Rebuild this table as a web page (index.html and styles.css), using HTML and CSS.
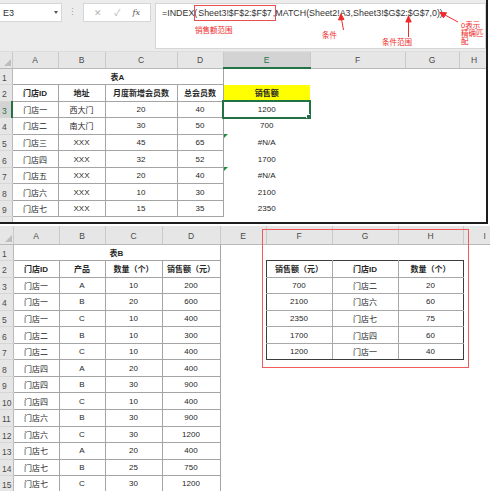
FILE: index.html
```html
<!DOCTYPE html>
<html lang="zh">
<head>
<meta charset="utf-8">
<title>INDEX MATCH</title>
<link rel="stylesheet" href="styles.css">
</head>
<body>
<div class="top">
  <div class="fbar">
    <div class="namebox"><span>E3</span><span class="dd"></span></div>
    <div class="dots">⋮</div>
    <div class="fbtns"><span class="x">✕</span><span class="ok">✓</span><span class="fx">fx</span></div>
    <div class="formula">=INDEX(<span class="hl">Sheet3!$F$2:$F$7</span>,MATCH(Sheet2!A3,Sheet3!$G$2:$G$7,0))</div>
    <span class="note n1">销售额范围</span>
    <span class="note n2">条件</span>
    <span class="note n3">条件范围</span>
    <span class="note n4">0表示<br>精确匹<br>配</span>
    <svg class="arrows" width="490" height="52" viewBox="0 0 490 52">
      <g stroke="#f02a2a" stroke-width="1" fill="#f02a2a">
        <line x1="343.5" y1="30" x2="341.5" y2="19"/>
        <polygon points="341,14 338.5,20 344,19.5"/>
        <line x1="408.5" y1="37" x2="408.5" y2="21"/>
        <polygon points="408.5,16 405.8,22 411.2,22"/>
        <line x1="458" y1="22" x2="445" y2="15"/>
        <polygon points="440,12.5 446.5,12.8 443.5,17.8"/>
      </g>
    </svg>
  </div>
  <table class="sheet sheet-a">
    <colgroup>
      <col class="w-rh"><col class="w-a"><col class="w-b"><col class="w-c"><col class="w-d"><col class="w-e"><col class="w-f"><col class="w-g"><col class="w-h">
    </colgroup>
    <tr class="hdr"><th class="corner"><span class="tri"></span></th><th>A</th><th>B</th><th>C</th><th>D</th><th class="selc">E</th><th>F</th><th>G</th><th>H</th></tr>
    <tr><td class="rh">1</td><td class="t b" colspan="4">表A</td><td></td><td></td><td></td><td></td></tr>
    <tr><td class="rh">2</td><td class="t b">门店ID</td><td class="t b">地址</td><td class="t b">月度新增会员数</td><td class="t b">总会员数</td><td class="yel b">销售额</td><td></td><td></td><td></td></tr>
    <tr><td class="rh selr">3</td><td class="t">门店一</td><td class="t">西大门</td><td class="t">20</td><td class="t">40</td><td class="v sel">1200</td><td></td><td></td><td></td></tr>
    <tr><td class="rh">4</td><td class="t">门店二</td><td class="t">南大门</td><td class="t">30</td><td class="t">50</td><td class="v">700</td><td></td><td></td><td></td></tr>
    <tr><td class="rh">5</td><td class="t">门店三</td><td class="t">XXX</td><td class="t">45</td><td class="t">65</td><td class="v err">#N/A</td><td></td><td></td><td></td></tr>
    <tr><td class="rh">6</td><td class="t">门店四</td><td class="t">XXX</td><td class="t">32</td><td class="t">52</td><td class="v">1700</td><td></td><td></td><td></td></tr>
    <tr><td class="rh">7</td><td class="t">门店五</td><td class="t">XXX</td><td class="t">20</td><td class="t">40</td><td class="v err">#N/A</td><td></td><td></td><td></td></tr>
    <tr><td class="rh">8</td><td class="t">门店六</td><td class="t">XXX</td><td class="t">10</td><td class="t">30</td><td class="v">2100</td><td></td><td></td><td></td></tr>
    <tr><td class="rh">9</td><td class="t">门店七</td><td class="t">XXX</td><td class="t">15</td><td class="t">35</td><td class="v">2350</td><td></td><td></td><td></td></tr>
    <tr><td class="rh"></td><td></td><td></td><td></td><td></td><td></td><td></td><td></td><td></td></tr>
  </table>
</div>

<div class="bottom">
  <table class="sheet sheet-b">
    <colgroup>
      <col class="wb-rh"><col class="wb-a"><col class="wb-b"><col class="wb-c"><col class="wb-d"><col class="wb-e"><col class="wb-f"><col class="wb-g"><col class="wb-h"><col class="wb-i">
    </colgroup>
    <tr class="hdr"><th class="corner"><span class="tri"></span></th><th>A</th><th>B</th><th>C</th><th>D</th><th>E</th><th>F</th><th>G</th><th>H</th><th class="lab-i">I</th></tr>
    <tr><td class="rh">1</td><td class="t b" colspan="4">表B</td><td></td><td></td><td></td><td></td><td></td></tr>
    <tr><td class="rh">2</td><td class="t b">门店ID</td><td class="t b">产品</td><td class="t b">数量（个）</td><td class="t b">销售额（元）</td><td></td><td class="r b rl rt">销售额（元）</td><td class="r b rt">门店ID</td><td class="r b rr rt">数量（个）</td><td></td></tr>
    <tr><td class="rh">3</td><td class="t">门店一</td><td class="t">A</td><td class="t">10</td><td class="t">200</td><td></td><td class="r rl">700</td><td class="r">门店二</td><td class="r rr">20</td><td></td></tr>
    <tr><td class="rh">4</td><td class="t">门店一</td><td class="t">B</td><td class="t">20</td><td class="t">600</td><td></td><td class="r rl">2100</td><td class="r">门店六</td><td class="r rr">60</td><td></td></tr>
    <tr><td class="rh">5</td><td class="t">门店一</td><td class="t">C</td><td class="t">10</td><td class="t">400</td><td></td><td class="r rl">2350</td><td class="r">门店七</td><td class="r rr">75</td><td></td></tr>
    <tr><td class="rh">6</td><td class="t">门店二</td><td class="t">B</td><td class="t">10</td><td class="t">300</td><td></td><td class="r rl">1700</td><td class="r">门店四</td><td class="r rr">60</td><td></td></tr>
    <tr><td class="rh">7</td><td class="t">门店二</td><td class="t">C</td><td class="t">10</td><td class="t">400</td><td></td><td class="r rl rb">1200</td><td class="r rb">门店一</td><td class="r rr rb">40</td><td></td></tr>
    <tr><td class="rh">8</td><td class="t">门店四</td><td class="t">A</td><td class="t">20</td><td class="t">400</td><td></td><td></td><td></td><td></td><td></td></tr>
    <tr><td class="rh">9</td><td class="t">门店四</td><td class="t">B</td><td class="t">30</td><td class="t">900</td><td></td><td></td><td></td><td></td><td></td></tr>
    <tr><td class="rh">10</td><td class="t">门店四</td><td class="t">C</td><td class="t">10</td><td class="t">400</td><td></td><td></td><td></td><td></td><td></td></tr>
    <tr><td class="rh">11</td><td class="t">门店六</td><td class="t">B</td><td class="t">30</td><td class="t">900</td><td></td><td></td><td></td><td></td><td></td></tr>
    <tr><td class="rh">12</td><td class="t">门店六</td><td class="t">C</td><td class="t">30</td><td class="t">1200</td><td></td><td></td><td></td><td></td><td></td></tr>
    <tr><td class="rh">13</td><td class="t">门店七</td><td class="t">A</td><td class="t">20</td><td class="t">400</td><td></td><td></td><td></td><td></td><td></td></tr>
    <tr><td class="rh">14</td><td class="t">门店七</td><td class="t">B</td><td class="t">25</td><td class="t">750</td><td></td><td></td><td></td><td></td><td></td></tr>
    <tr><td class="rh">15</td><td class="t">门店七</td><td class="t">C</td><td class="t">30</td><td class="t">1200</td><td></td><td></td><td></td><td></td><td></td></tr>
  </table>
  <div class="redbox"></div>
</div>
</body>
</html>
```

FILE: styles.css
```css
* { box-sizing: border-box; }
html, body { margin: 0; padding: 0; background: #fff; }
body {
  width: 490px;
  height: 491px;
  overflow: hidden;
  font-family: "Liberation Sans", "Noto Sans CJK SC", sans-serif;
  color: #262626;
}

/* ---------- top screenshot ---------- */
.top {
  position: relative;
  width: 488px;
  height: 224px;
  border-right: 2px solid #1c1c1c;
  border-bottom: 2px solid #1c1c1c;
  overflow: hidden;
}
.fbar {
  position: relative;
  height: 52px;
  background: #ececec;
  display: flex;
  align-items: flex-start;
  padding-top: 3px;
  border-bottom: 1px solid #dcdcdc;
}
.namebox {
  width: 62px;
  height: 19px;
  background: #fff;
  border: 1px solid #d6d6d6;
  border-left: none;
  display: flex;
  align-items: center;
  justify-content: space-between;
  padding: 0 3px 0 3px;
  font-size: 9px;
  color: #333;
}
.dd {
  width: 0; height: 0;
  border-left: 2.5px solid transparent;
  border-right: 2.5px solid transparent;
  border-top: 3px solid #555;
}
.dots {
  width: 21px;
  text-align: center;
  font-size: 9px;
  line-height: 19px;
  color: #a0a0a0;
}
.fbtns {
  width: 68px;
  height: 19px;
  background: #fff;
  border: 1px solid #d6d6d6;
  display: flex;
  align-items: center;
  justify-content: space-around;
  padding: 0 4px;
  font-size: 9px;
  color: #b4b4b4;
}
.fbtns .fx { font-family: "DejaVu Serif", serif; font-style: italic; font-size: 8px; color: #555; }
.formula {
  margin-left: 4px;
  width: 331px;
  height: 46px;
  background: #fff;
  border: 1px solid #d6d6d6;
  padding: 4px 0 0 6px;
  font-size: 8.9px;
  color: #333;
  white-space: nowrap;
}
.hl {
  outline: 1px solid #e85050;
  outline-offset: 2px;
  padding: 0 1px;
}
.note {
  position: absolute;
  font-size: 7.5px;
  line-height: 8px;
  color: #f02a2a;
  white-space: nowrap;
}
.n1 { left: 195px; top: 27px; }
.n2 { left: 322px; top: 32px; }
.n3 { left: 382px; top: 39px; }
.n4 { left: 461px; top: 22px; }
.arrows { position: absolute; left: 0; top: 0; }

/* ---------- sheets ---------- */
.sheet {
  border-collapse: collapse;
  table-layout: fixed;
  font-size: 8px;
}
.sheet td, .sheet th {
  padding: 0;
  text-align: center;
  white-space: nowrap;
  overflow: hidden;
  font-weight: normal;
}
.sheet tr { height: 16.56px; }
.sheet .hdr th {
  background: #e6e6e6;
  color: #4a4a4a;
  font-size: 8.5px;
  border-right: 1px solid #cacaca;
  border-bottom: 1px solid #b9b9b9;
}
.sheet .hdr th.corner { position: relative; }
.tri {
  position: absolute;
  right: 1px;
  bottom: 2px;
  width: 0; height: 0;
  border-left: 7px solid transparent;
  border-bottom: 7px solid #bdbdbd;
}
.rh {
  background: #e6e6e6;
  color: #4a4a4a;
  font-size: 8.5px;
  text-align: left !important;
  padding-left: 2px !important;
  padding-top: 3px !important;
  border-right: 1px solid #b9b9b9;
  border-bottom: 1px solid #d6d6d6;
}
.t { border: 1px solid #a4a4a4; }
.b { font-weight: bold !important; }

.sheet-a { width: 489px; }
.sheet-a .hdr { height: 16px; }
.w-rh { width: 12px; }
.w-a { width: 46px; }
.w-b { width: 47px; }
.w-c { width: 72px; }
.w-d { width: 46px; }
.w-e { width: 87px; }
.w-f { width: 95px; }
.w-g { width: 54px; }
.w-h { width: 30px; }

.sheet-a .hdr th.selc {
  background: #d3d3d3;
  color: #217346;
  border-bottom: 2px solid #217346;
}
.rh.selr {
  background: #d3d3d3;
  color: #217346;
  border-right: 2px solid #217346;
}
.yel { background: #ffff00; }
.v { position: relative; }
.sel {
  outline: 2px solid #217346;
  outline-offset: -1px;
}
.sel::after {
  content: "";
  position: absolute;
  right: -2px;
  bottom: -2px;
  width: 4px;
  height: 4px;
  background: #217346;
  border: 1px solid #fff;
}
.err::before {
  content: "";
  position: absolute;
  left: 0;
  top: 0;
  width: 0; height: 0;
  border-top: 4px solid #1e8c3c;
  border-right: 4px solid transparent;
}

/* ---------- bottom screenshot ---------- */
.bottom {
  position: relative;
  height: 267px;
  overflow: hidden;
  padding-top: 2px;
}
.sheet-b { width: 503px; }
.sheet-b .hdr { height: 18px; }
.sheet-b .hdr th { padding-top: 3px; }
.wb-rh { width: 13px; }
.wb-a { width: 46px; }
.wb-b { width: 46px; }
.wb-c { width: 57px; }
.wb-d { width: 58px; }
.wb-e { width: 46px; }
.wb-f { width: 66px; }
.wb-g { width: 66px; }
.wb-h { width: 65px; }
.wb-i { width: 40px; }
.sheet-b .hdr th.lab-i { text-align: left; padding-left: 20px; }

.r { border: 1px solid #a8a8a8; }
.r.rl { border-left: 1px solid #3c3c3c; }
.r.rr { border-right: 1px solid #3c3c3c; }
.r.rt { border-top: 1px solid #3c3c3c; }
.r.rb { border-bottom: 1px solid #3c3c3c; }

.redbox {
  position: absolute;
  left: 262px;
  top: 5px;
  width: 207px;
  height: 139px;
  border: 1px solid #f05a5a;
}
```
